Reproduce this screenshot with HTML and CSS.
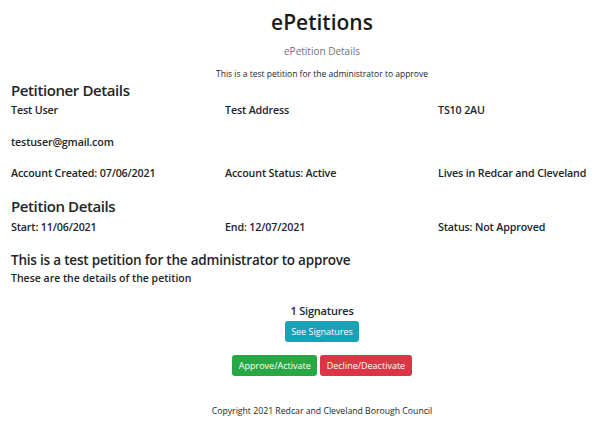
FILE: index.html
```html
<!DOCTYPE html>
<html>
<head>
<meta charset="utf-8">
<link rel="stylesheet" href="styles.css">
</head>
<body>
<div class="page">
<header class="head shifted">
  <h1 class="title">ePetitions</h1>
  <p class="subtitle">ePetition Details</p>
  <p class="lead">This is a test petition for the administrator to approve</p>
</header>
<main class="content">
  <h2 class="section">Petitioner Details</h2>
  <div class="row r1">
    <span>Test User</span><span>Test Address</span><span>TS10 2AU</span>
  </div>
  <div class="row r2">
    <span>testuser@gmail.com</span>
  </div>
  <div class="row r3">
    <span>Account Created: 07/06/2021</span><span>Account Status: Active</span><span>Lives in Redcar and Cleveland</span>
  </div>
  <h2 class="section s2">Petition Details</h2>
  <div class="row r4">
    <span>Start: 11/06/2021</span><span>End: 12/07/2021</span><span>Status: Not Approved</span>
  </div>
  <h3 class="ptitle">This is a test petition for the administrator to approve</h3>
  <p class="pdesc">These are the details of the petition</p>
</main>
<section class="center shifted">
  <p class="sigs">1 Signatures</p>
  <button class="btn info">See Signatures</button>
  <div class="actions">
    <button class="btn success">Approve/Activate</button>
    <button class="btn danger">Decline/Deactivate</button>
  </div>
</section>
<footer class="foot shifted">Copyright 2021 Redcar and Cleveland Borough Council</footer>
</div>
</body>
</html>
```
FILE: styles.css
```css
* { box-sizing: border-box; }
body {
  margin: 0;
  font-family: "Open Sans", "Noto Sans", sans-serif;
  color: #212529;
  background: #fff;
}
.page { width: 602px; }
.shifted { padding-left: 42px; }
.head { text-align: center; padding-top: 8px; }
.title { margin: 0; font-size: 21px; font-weight: 600; line-height: 28px; color: #1b1b1b; }
.subtitle { margin: 8px 0 0; font-size: 10px; color: #6c757d; line-height: 14px; }
.lead { margin: 10px 0 0; font-size: 8.5px; line-height: 12px; color: #212529; }
.content { padding: 0 11px; }
.section { margin: 0; font-size: 15px; font-weight: 600; letter-spacing: -0.4px; line-height: 20px; }
.s2 { margin-top: 16px; }
.row {
  display: grid;
  grid-template-columns: 214px 213px 1fr;
  font-size: 10.7px;
  font-weight: 600;
  letter-spacing: -0.15px;
  line-height: 14px;
}
.r1 { margin-top: 3px; }
.r2 { margin-top: 18px; }
.r3 { margin-top: 17px; }
.r4 { margin-top: 4px; }
.ptitle { margin: 18px 0 0; font-size: 13.5px; font-weight: 600; letter-spacing: -0.2px; line-height: 17px; }
.pdesc { margin: 2px 0 0; font-size: 10.5px; font-weight: 600; line-height: 14px; }
.center { text-align: center; margin-top: 19px; }
.sigs { margin: 0; font-size: 11px; font-weight: 600; letter-spacing: -0.2px; line-height: 14px; }
.btn {
  font-family: inherit;
  font-size: 9px;
  color: #fff;
  border: none;
  border-radius: 3px;
  padding: 0 6.5px;
  height: 21px;
  line-height: 21px;
  cursor: pointer;
}
.info { background: #17a2b8; margin-top: 0; }
.actions { display: flex; justify-content: center; gap: 3px; margin-top: 13px; }
.success { background: #28a745; }
.danger { background: #dc3545; }
.foot { text-align: center; font-size: 8.7px; margin-top: 29px; }
```
